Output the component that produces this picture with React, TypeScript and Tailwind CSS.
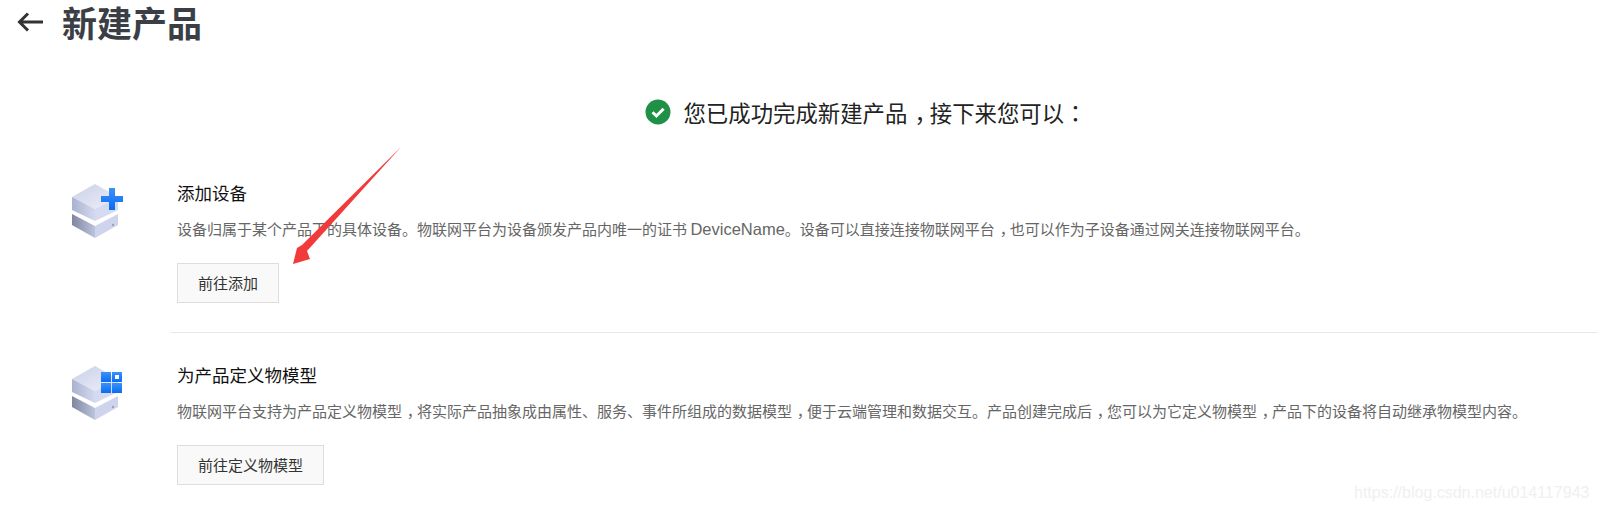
const font = { fontFamily: '"Noto Sans CJK SC", "Liberation Sans", sans-serif' }
const punctFont = { fontFamily: '"Noto Sans CJK KR", sans-serif' }
const latinFont = { fontFamily: '"Liberation Sans", sans-serif' }

// the reference font centres full-width punctuation in its cell and has wider latin
function Zh({ text }: { text: string }) {
  return (
    <>
      {text.split(/([，：]|DeviceName)/).map((part, i) => {
        if (i % 2 === 0) return part
        if (part === '，') return <span key={i} className="pl-[0.32em] pr-[0.18em] [font-feature-settings:'halt']">{part}</span>
        if (part === '：') return <span key={i} style={punctFont}>{part}</span>
        return <span key={i} className="text-[16.5px]" style={latinFont}>{part}</span>
      })}
    </>
  )
}

function Cube({ id, children }: { id: string; children: React.ReactNode }) {
  return (
    <svg width="56" height="60" viewBox="0 0 56 60" className="shrink-0">
      <defs>
        <linearGradient id={`${id}-top`} x1="0" y1="0" x2="1" y2="1">
          <stop offset="0" stopColor="#c9cfe6" />
          <stop offset="1" stopColor="#eef0fb" />
        </linearGradient>
        <linearGradient id={`${id}-left`} x1="0" y1="0" x2="1" y2="0">
          <stop offset="0" stopColor="#a9b2cf" />
          <stop offset="1" stopColor="#d3d9ee" />
        </linearGradient>
        <linearGradient id={`${id}-low`} x1="0" y1="0" x2="1" y2="0">
          <stop offset="0" stopColor="#7f869f" />
          <stop offset="1" stopColor="#bcc3dc" />
        </linearGradient>
        <linearGradient id={`${id}-blue`} x1="0" y1="0" x2="0" y2="1">
          <stop offset="0" stopColor="#3a92fb" />
          <stop offset="1" stopColor="#0a6cf0" />
        </linearGradient>
      </defs>
      <polygon points="25,3 48,16 25,28 2,16" fill={`url(#${id}-top)`} />
      <polygon points="2,16 25,28 25,40 2,29" fill={`url(#${id}-left)`} />
      <polygon points="25,28 48,16 48,29 25,40" fill="#d5daf0" />
      <polygon points="2,33 25,45 25,57 2,44" fill={`url(#${id}-low)`} />
      <polygon points="25,45 48,33 48,44 25,57" fill="#cdd4ec" />
      <circle cx="43" cy="44" r="1.2" fill="#9aa2bd" />
      {children}
    </svg>
  )
}

function Section({ icon, title, desc, action, divided }: {
  icon: React.ReactNode
  title: string
  desc: string
  action: string
  divided?: boolean
}) {
  return (
    <div className="flex pl-[70px]">
      <div className="w-[100px] shrink-0 pt-[3px]">{icon}</div>
      <div className={`flex-1 pl-[7px] ${divided ? 'h-[155px] border-b border-[#e8e8e8]' : ''}`}>
        <h3 className="text-[17.5px] leading-[30px] text-[#111] font-normal">{title}</h3>
        <p className="mt-[10px] h-[22px] text-[15px] leading-[22px] text-[#666]"><Zh text={desc} /></p>
        <button className="mt-[23px] h-[40px] px-[20px] border border-[#ddd] bg-[#f9f9f9] text-[15px] text-[#333]">
          {action}
        </button>
      </div>
    </div>
  )
}

export default function App() {
  return (
    <div className="relative h-[511px] overflow-hidden bg-white" style={font}>
      <header className="flex h-[44px] items-center pl-[17px]">
        <svg width="26" height="20" viewBox="0 0 26 20" fill="none" stroke="#333" strokeWidth="3">
          <path d="M26 10H3M11 1.5 2.5 10l8.5 8.5" />
        </svg>
        <h1 className="ml-[19px] text-[35px] leading-[44px] font-bold text-[#3b3f45]">新建产品</h1>
      </header>

      <div className="mt-[51px] flex h-[34px] items-center justify-center pl-[134px]">
        <svg width="26" height="26" viewBox="0 0 26 26">
          <circle cx="13" cy="13" r="12.5" fill="#1f9146" />
          <path d="M7.5 13.2 11.4 17 18.6 9.8" fill="none" stroke="#fff" strokeWidth="3" />
        </svg>
        <p className="ml-[12px] text-[22.4px] leading-[34px] text-[#222]"><Zh text="您已成功完成新建产品，接下来您可以：" /></p>
      </div>

      <div className="mt-[49px]">
        <Section
          divided
          icon={
            <Cube id="a">
              <path d="M39 7h6v8h8v6h-8v8h-6v-8h-8v-6h8z" fill="url(#a-blue)" />
            </Cube>
          }
          title="添加设备"
          desc="设备归属于某个产品下的具体设备。物联网平台为设备颁发产品内唯一的证书 DeviceName。设备可以直接连接物联网平台，也可以作为子设备通过网关连接物联网平台。"
          action="前往添加"
        />
        <div className="h-[27px]" />
        <Section
          icon={
            <Cube id="b">
              <rect x="31" y="9" width="10" height="10" fill="url(#b-blue)" />
              <rect x="42" y="9" width="10" height="10" fill="url(#b-blue)" />
              <rect x="45" y="12" width="4" height="4" fill="#fff" />
              <rect x="31" y="20" width="10" height="10" fill="url(#b-blue)" />
              <rect x="42" y="20" width="10" height="10" fill="url(#b-blue)" />
            </Cube>
          }
          title="为产品定义物模型"
          desc="物联网平台支持为产品定义物模型，将实际产品抽象成由属性、服务、事件所组成的数据模型，便于云端管理和数据交互。产品创建完成后，您可以为它定义物模型，产品下的设备将自动继承物模型内容。"
          action="前往定义物模型"
        />
      </div>

      {/* red annotation arrow drawn over the page */}
      <svg className="absolute left-[280px] top-[140px]" width="130" height="130" viewBox="0 0 130 130">
        <polygon points="121,7 27,111 30,119 13,124 17,108 22,105" fill="#f23a3a" />
      </svg>

      <span
        className="absolute left-[1354px] top-[483px] text-[16px] leading-[20px] text-[#f0f0f0]"
        style={{ fontFamily: '"Liberation Sans", sans-serif' }}
      >
        https://blog.csdn.net/u014117943
      </span>
    </div>
  )
}
